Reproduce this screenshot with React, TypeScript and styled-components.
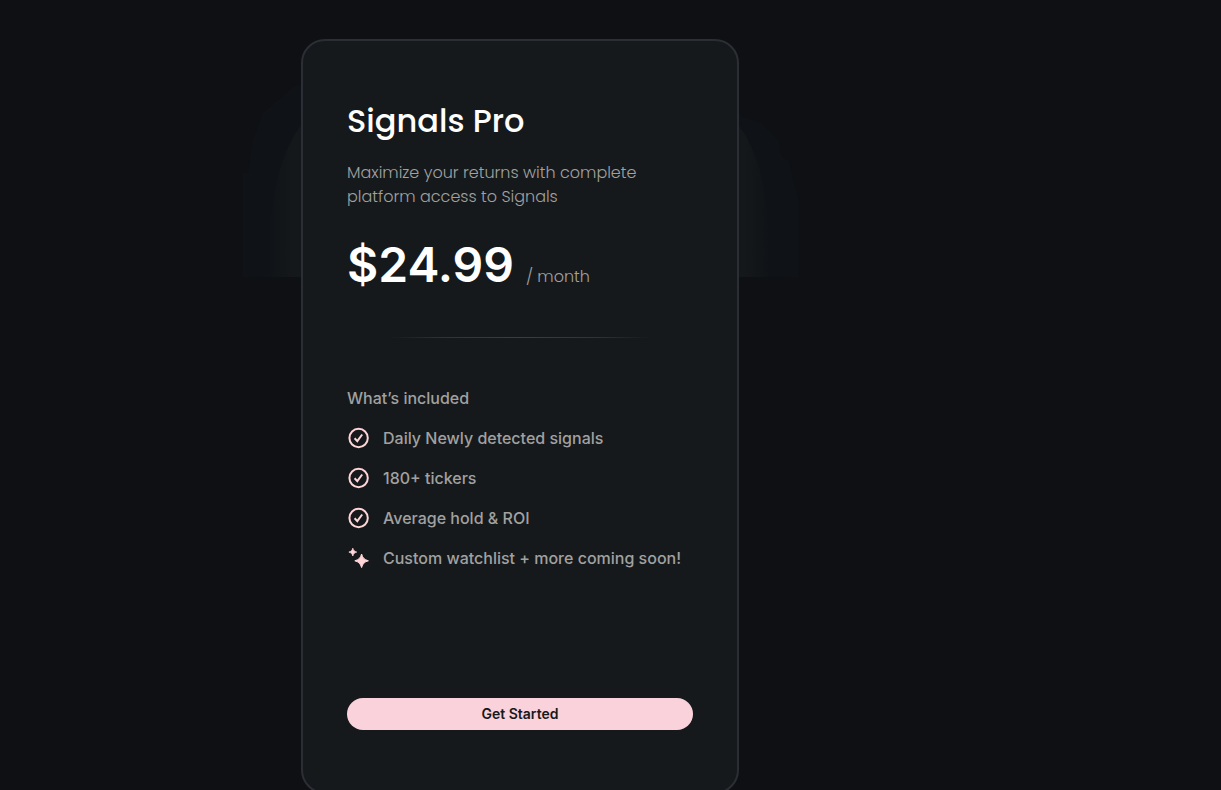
import React from "react";
import styled, { createGlobalStyle } from "styled-components";

const GlobalStyle = createGlobalStyle`
  *, *::before, *::after { box-sizing: border-box; }
  body {
    margin: 0;
    background: #0f1013;
    color: #a1a1a1;
    font-family: Inter, sans-serif;
    font-size: 16px;
    line-height: 24px;
  }
  h1, h2, p, ul { margin: 0; padding: 0; }
`;

const Page = styled.main`
  display: flex;
  justify-content: center;
  align-items: flex-start;
  height: 100vh;
  overflow: hidden;
  padding: 39px 181px 0 0;
`;

const CardWrap = styled.div`
  position: relative;
  width: 100%;
  max-width: 438px;
`;

const Glow = styled.svg`
  position: absolute;
  top: 38px;
  left: -60px;
  width: 560px;
  height: 200px;
`;

const Card = styled.section`
  position: relative;
  display: flex;
  flex-direction: column;
  padding: 60px 44px 62px;
  border: 2px solid #2b2e35;
  border-radius: 24px;
  background: #16191b;
`;

const Title = styled.h1`
  color: #fff;
  font-family: Poppins, Inter, sans-serif;
  font-size: 32px;
  font-weight: 500;
  line-height: 40px;
`;

const Description = styled.p`
  margin-top: 20px;
  font-family: Poppins, Inter, sans-serif;
  font-weight: 300;
`;

const PriceRow = styled.p`
  display: flex;
  align-items: baseline;
  gap: 12px;
  margin-top: 24px;
`;

const Amount = styled.span`
  color: #fff;
  font-size: 48px;
  font-weight: 600;
  line-height: 64px;
`;

const Period = styled.span`
  font-family: Poppins, Inter, sans-serif;
  font-weight: 300;
`;

const Divider = styled.hr`
  width: 260px;
  height: 1px;
  margin: 40px auto 48px;
  border: 0;
  background: linear-gradient(90deg, transparent, #2f3335 20%, #3a3e40 50%, #2f3335 80%, transparent);
`;

const Subtitle = styled.h2`
  font-size: 16px;
  font-weight: 500;
  line-height: 24px;
`;

const FeatureList = styled.ul`
  display: flex;
  flex-direction: column;
  gap: 16px;
  margin-top: 16px;
  list-style: none;
`;

const Feature = styled.li`
  display: flex;
  align-items: center;
  gap: 12px;
  font-weight: 500;
`;

const Icon = styled.svg`
  flex: none;
  width: 24px;
  height: 24px;
  color: #ffd5d8;
`;

const StartButton = styled.button`
  height: 32px;
  margin-top: 128px;
  border: 0;
  border-radius: 16px;
  background: #fad2db;
  color: #16191b;
  font: 600 14px/20px Inter, sans-serif;
  cursor: pointer;
`;

function CheckIcon() {
  return (
    <Icon viewBox="0 0 24 24" fill="none" stroke="currentColor" strokeWidth="2" aria-hidden="true">
      <circle cx="11.6" cy="12" r="9.2" />
      <path d="M7.6 12.300l2.700 2.900 4.900-6.700" />
    </Icon>
  );
}

function SparkleIcon() {
  return (
    <Icon viewBox="0 0 24 24" fill="currentColor" stroke="currentColor" strokeLinejoin="round" aria-hidden="true">
      <path d="M14.600 8c1.200 4.100 2.700 5.600 6.800 6.800-4.100 1.200-5.600 2.700-6.800 6.800-1.200-4.100-2.700-5.600-6.800-6.800 4.100-1.200 5.600-2.700 6.800-6.800z" strokeWidth="1" />
      <path d="M5.800 2.200c.7 2.300 1.600 3.200 3.900 3.900-2.300.7-3.200 1.600-3.900 3.900-.7-2.300-1.600-3.200-3.900-3.900 2.300-.7 3.200-1.600 3.900-3.900z" strokeWidth=".8" />
    </Icon>
  );
}

const features = [
  { label: "Daily Newly detected signals", Mark: CheckIcon },
  { label: "180+ tickers", Mark: CheckIcon },
  { label: "Average hold & ROI", Mark: CheckIcon },
  { label: "Custom watchlist + more coming soon!", Mark: SparkleIcon },
];

export default function App() {
  return (
    <>
      <GlobalStyle />
      <Page>
        <CardWrap>
          <Glow viewBox="0 0 560 200" aria-hidden="true">
            <defs>
              <linearGradient id="inner" x1="0" x2="1">
                <stop offset="0" stopColor="#15181a" stopOpacity="0" />
                <stop offset=".05" stopColor="#15181a" />
                <stop offset=".95" stopColor="#15181a" />
                <stop offset="1" stopColor="#15181a" stopOpacity="0" />
              </linearGradient>
            </defs>
            <path fill="#0f1317" d="M2 200V96H7L12 62 22 36 36 24 52 10 80 0H480L500 39 520 46 538 64 540 79 548 84 553 106 557 120V200z" />
            <path fill="url(#inner)" d="M27 200C27 140 34 80 62 46H496C517 75 529 110 529 200z" />
          </Glow>
          <Card>
            <Title>Signals Pro</Title>
            <Description>
              Maximize your returns with complete
              <br />
              platform access to Signals
            </Description>
            <PriceRow>
              <Amount>$24.99</Amount>
              <Period>/ month</Period>
            </PriceRow>
            <Divider />
            <Subtitle>What’s included</Subtitle>
            <FeatureList>
              {features.map(({ label, Mark }) => (
                <Feature key={label}>
                  <Mark />
                  {label}
                </Feature>
              ))}
            </FeatureList>
            <StartButton type="button">Get Started</StartButton>
          </Card>
        </CardWrap>
      </Page>
    </>
  );
}
